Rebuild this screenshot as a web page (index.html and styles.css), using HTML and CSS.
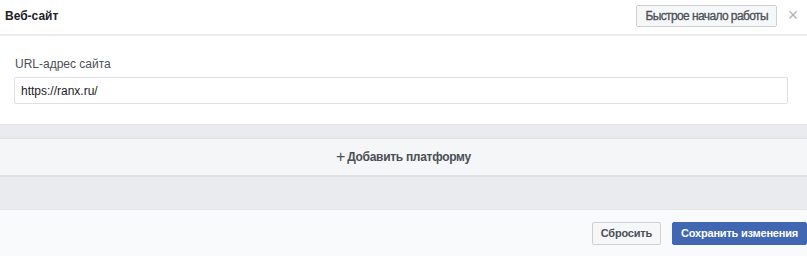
FILE: index.html
```html
<!DOCTYPE html>
<html lang="ru">
<head>
    <meta charset="UTF-8">
    <title>Веб-сайт</title>
    <link rel="stylesheet" href="styles.css">
</head>
<body>
    <div class="panel">
        <div class="panel-header">
            <h2>Веб-сайт</h2>
            <div class="header-actions">
                <button class="btn">Быстрое начало работы</button>
                <span class="close">&times;</span>
            </div>
        </div>
        <div class="panel-body">
            <label for="siteUrl">URL-адрес сайта</label>
            <input type="text" id="siteUrl" value="https://ranx.ru/">
        </div>
        <div class="spacer"></div>
        <div class="add-platform">
            <span class="plus">+</span> Добавить платформу
        </div>
        <div class="spacer tall"></div>
        <div class="panel-footer">
            <button class="btn">Сбросить</button>
            <button class="btn primary">Сохранить изменения</button>
        </div>
    </div>
</body>
</html>
```

FILE: styles.css
```css
body {
    margin: 0;
    font-family: 'Liberation Sans', Arial, sans-serif;
    font-size: 12px;
    color: #1d2129;
    background: #fff;
}
.panel {
    width: 807px;
    height: 257px;
    overflow: hidden;
}
.panel-header {
    height: 34px;
    border-bottom: 2px solid #ebedf0;
    display: flex;
    justify-content: space-between;
    align-items: center;
    padding-left: 5px;
}
.panel-header h2 {
    margin: 0 0 3px;
    font-size: 12px;
    font-weight: bold;
    color: #1d2129;
}
.header-actions {
    display: flex;
    align-items: center;
    gap: 10px;
    padding-right: 8px;
    margin-bottom: 3px;
}
.close {
    font-size: 18px;
    color: #b0b4ba;
    width: 12px;
    text-align: center;
}
.btn {
    font-family: 'Liberation Sans', Arial, sans-serif;
    font-size: 11px;
    font-weight: bold;
    letter-spacing: -0.2px;
    height: 23px;
    padding: 0 8px;
    color: #4b4f56;
    background: #f6f7f9;
    border: 1px solid #ced0d4;
    border-radius: 2px;
}
.panel-header .btn {
    height: 22px;
    font-size: 12px;
    letter-spacing: -0.6px;
    color: #4b4f56;
    font-weight: normal;
    -webkit-text-stroke: 0.3px #4b4f56;
}
.panel-body {
    padding: 21px 19px 20px 14px;
    height: 47px;
}
.panel-body label {
    display: block;
    margin: 0 0 6px 1px;
    color: #4b4f56;
    font-size: 12px;
}
.panel-body input {
    box-sizing: border-box;
    width: 774px;
    height: 27px;
    border: 1px solid #dddfe2;
    border-radius: 2px;
    padding: 0 6px;
    font-family: 'Liberation Sans', Arial, sans-serif;
    font-size: 12px;
    color: #1d2129;
    outline: none;
}
.spacer {
    height: 13px;
    background: #e9ebee;
    border-top: 1px solid #e3e5e8;
    border-bottom: 1px solid #dddfe2;
}
.spacer.tall {
    height: 32px;
    border-top: 2px solid #dddfe2;
    border-bottom: 1px solid #e3e5e8;
}
.add-platform {
    height: 36px;
    background: #f5f6f7;
    display: flex;
    justify-content: center;
    align-items: center;
    color: #4b4f56;
    font-weight: bold;
    letter-spacing: -0.3px;
}
.plus {
    font-size: 16px;
    font-weight: normal;
    margin-right: 2px;
}
.panel-footer {
    background: #f9fafb;
    height: 46px;
    display: flex;
    justify-content: flex-end;
    align-items: center;
    gap: 11px;
    padding-right: 0;
}
.btn.primary {
    background: #4267b2;
    border-color: #4267b2;
    color: #fff;
}
```
